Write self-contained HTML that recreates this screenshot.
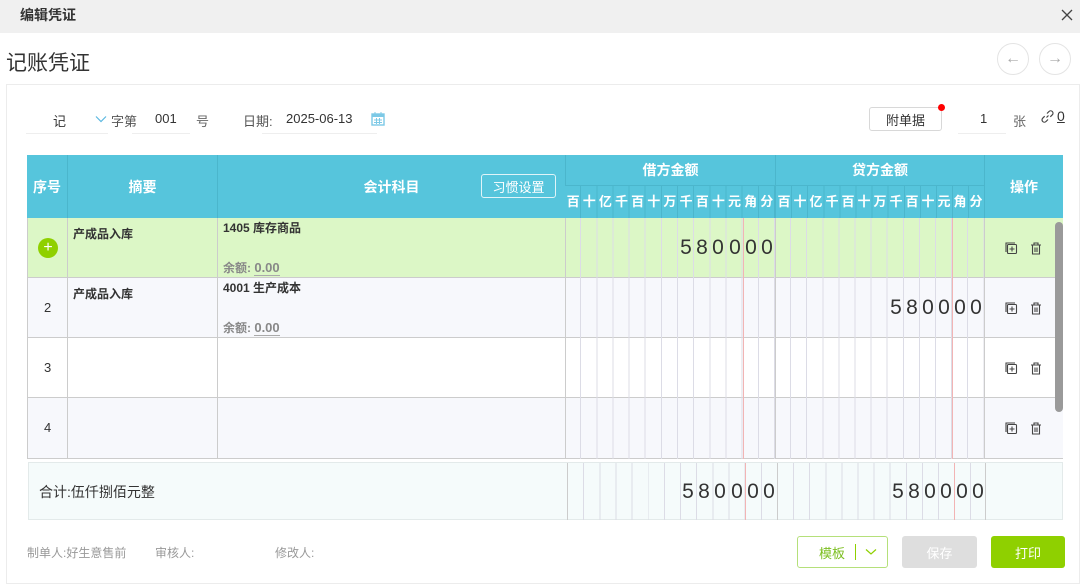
<!DOCTYPE html>
<html><head><meta charset="utf-8"><style>
*{margin:0;padding:0;box-sizing:border-box}
body{width:1080px;height:577px;overflow:hidden;background:#fff;font-family:"Liberation Sans","Noto Sans CJK SC",sans-serif;color:#333;position:relative}
.a{position:absolute}
.top{left:0;top:0;width:1080px;height:33px;background:#f0f0f0}
.hd{background:#56c5dc;color:#fff;font-weight:bold;font-size:14px}
.c{display:flex;align-items:center;justify-content:center}
.grid{background-image:repeating-linear-gradient(to right,transparent 0,transparent 15.15px,#dcdce6 15.15px,#dcdce6 16.15px)}
.grid2{background-image:repeating-linear-gradient(to right,transparent 0,transparent 15.1px,#dcdce6 15.1px,#dcdce6 16.1px)}
.hgrid{background-image:repeating-linear-gradient(to right,transparent 0,transparent 15.15px,#4bb6cc 15.15px,#4bb6cc 16.15px)}
.hgrid2{background-image:repeating-linear-gradient(to right,transparent 0,transparent 15.1px,#4bb6cc 15.1px,#4bb6cc 16.1px)}
.sub{display:flex;font-size:13px}
.sub span{width:16.15px;text-align:center;line-height:32px}
.sub2 span{width:16.1px}
.dg{position:absolute;font-size:21px;color:#333;width:16px;text-align:center;letter-spacing:0}
</style></head><body>
<div class="a top"></div>
<div class="a" style="left:20px;top:5px;font-size:14px;font-weight:bold;color:#333">编辑凭证</div>
<svg class="a" style="left:1061px;top:9px" width="12" height="12" viewBox="0 0 12 12"><path d="M1 1L11 11M11 1L1 11" stroke="#444" stroke-width="1.3"/></svg>
<div class="a" style="left:6px;top:47px;font-size:21px;color:#333">记账凭证</div>
<div class="a c" style="left:997px;top:43px;width:32px;height:32px;border:1px solid #e4e4e4;border-radius:50%;color:#aaa;font-size:16px">←</div>
<div class="a c" style="left:1039px;top:43px;width:32px;height:32px;border:1px solid #e4e4e4;border-radius:50%;color:#aaa;font-size:16px">→</div>
<div class="a" style="left:6px;top:84px;width:1074px;height:500px;border:1px solid #ececec"></div>

<div class="a" style="left:53px;top:111px;font-size:13px">记</div>
<div class="a" style="left:26px;top:133px;width:82px;height:1px;background:#eee"></div>
<svg class="a" style="left:95px;top:115px" width="12" height="8" viewBox="0 0 12 8"><path d="M1 1.5L6 6.5L11 1.5" fill="none" stroke="#5bb8e0" stroke-width="1.2"/></svg>
<div class="a" style="left:111px;top:111px;font-size:13px;color:#555">字第</div>
<div class="a" style="left:155px;top:111px;font-size:13px">001</div>
<div class="a" style="left:132px;top:133px;width:58px;height:1px;background:#eee"></div>
<div class="a" style="left:196px;top:111px;font-size:13px;color:#666">号</div>
<div class="a" style="left:243px;top:111px;font-size:13px;color:#555">日期:</div>
<div class="a" style="left:286px;top:111px;font-size:13px">2025-06-13</div>
<div class="a" style="left:262px;top:133px;width:115px;height:1px;background:#eee"></div>
<svg class="a" style="left:371px;top:112px" width="14" height="14" viewBox="0 0 14 14"><rect x="1" y="2" width="12" height="11" fill="none" stroke="#7cc9e6" stroke-width="1.4"/><rect x="1" y="2" width="12" height="3" fill="#7cc9e6"/><path d="M4 0v3M10 0v3M3 8h8M3 10.5h8M5.5 6v6M8.5 6v6" stroke="#7cc9e6" stroke-width="1"/></svg>

<div class="a c" style="left:869px;top:107px;width:73px;height:24px;border:1px solid #d8d8d8;border-radius:3px;font-size:13px">附单据</div>
<div class="a" style="left:938px;top:104px;width:7px;height:7px;border-radius:50%;background:#f00"></div>
<div class="a" style="left:980px;top:111px;font-size:13px">1</div>
<div class="a" style="left:958px;top:133px;width:48px;height:1px;background:#eee"></div>
<div class="a" style="left:1013px;top:111px;font-size:13px;color:#666">张</div>
<svg class="a" style="left:1041px;top:110px" width="13" height="13" viewBox="0 0 13 13"><path d="M5.5 7.5L7.5 5.5M6 3.5L8 1.5a2.2 2.2 0 0 1 3.3 3.3L9.3 6.8M7 9.5L5 11.5a2.2 2.2 0 0 1-3.3-3.3L3.7 6.2" fill="none" stroke="#444" stroke-width="1.2"/></svg>
<div class="a" style="left:1057px;top:108px;font-size:14px;text-decoration:underline">0</div>

<!-- header -->
<div class="a hd" style="left:27px;top:155px;width:1036px;height:63px"></div>
<div class="a hd c" style="left:27px;top:155px;width:40px;height:63px">序号</div>
<div class="a hd c" style="left:67px;top:155px;width:150px;height:63px;border-left:1px solid #4bb6cc">摘要</div>
<div class="a hd c" style="left:217px;top:155px;width:348px;height:63px;border-left:1px solid #4bb6cc">会计科目</div>
<div class="a c" style="left:481px;top:174px;width:75px;height:24px;border:1px solid #e0f4f8;border-radius:3px;color:#fff;font-size:13px">习惯设置</div>
<div class="a hd c" style="left:565px;top:155px;width:210px;height:31px;border-left:1px solid #4bb6cc;border-bottom:1px solid #4bb6cc">借方金额</div>
<div class="a hd c" style="left:775px;top:155px;width:209px;height:31px;border-left:1px solid #4bb6cc;border-bottom:1px solid #4bb6cc">贷方金额</div>
<div class="a hd c" style="left:984px;top:155px;width:79px;height:63px;border-left:1px solid #4bb6cc">操作</div>
<div class="a hd sub hgrid" style="left:565px;top:186px;width:210px;height:32px"><span>百</span><span>十</span><span>亿</span><span>千</span><span>百</span><span>十</span><span>万</span><span>千</span><span>百</span><span>十</span><span>元</span><span>角</span><span>分</span></div>
<div class="a hd sub sub2 hgrid2" style="left:775px;top:186px;width:209px;height:32px;border-left:1px solid #4bb6cc"><span>百</span><span>十</span><span>亿</span><span>千</span><span>百</span><span>十</span><span>万</span><span>千</span><span>百</span><span>十</span><span>元</span><span>角</span><span>分</span></div>

<!-- rows -->
<div class="a" style="left:27px;top:218px;width:1036px;height:60px;background:#dcf7c6;border-bottom:1px solid #ccc"></div>
<div class="a" style="left:27px;top:278px;width:1036px;height:60px;background:#f7f8fc;border-bottom:1px solid #ccc"></div>
<div class="a" style="left:27px;top:338px;width:1036px;height:60px;background:#fff;border-bottom:1px solid #ccc"></div>
<div class="a" style="left:27px;top:398px;width:1036px;height:61px;background:#f7f8fc;border-bottom:1px solid #ccc"></div>
<div class="a grid" style="left:565px;top:218px;width:210px;height:241px"></div>
<div class="a grid2" style="left:775px;top:218px;width:209px;height:241px"></div>
<div class="a" style="left:27px;top:218px;width:1px;height:241px;background:#ccc"></div>
<div class="a" style="left:67px;top:218px;width:1px;height:241px;background:#ccc"></div>
<div class="a" style="left:217px;top:218px;width:1px;height:241px;background:#ccc"></div>
<div class="a" style="left:565px;top:218px;width:1px;height:241px;background:#ccc"></div>
<div class="a" style="left:743px;top:218px;width:1px;height:241px;background:#f2b4b4"></div>
<div class="a" style="left:775px;top:218px;width:1px;height:241px;background:#ccc"></div>
<div class="a" style="left:952px;top:218px;width:1px;height:241px;background:#f2b4b4"></div>
<div class="a" style="left:984px;top:218px;width:1px;height:241px;background:#ccc"></div>
<div class="a" style="left:1055px;top:222px;width:8px;height:190px;background:#9a9a9a;border-radius:4px"></div>

<div class="a c" style="left:38px;top:238px;width:20px;height:20px;border-radius:50%;background:#8fd000;color:#fff;font-size:16px">+</div>
<div class="a" style="left:44px;top:300px;font-size:13px">2</div>
<div class="a" style="left:44px;top:360px;font-size:13px">3</div>
<div class="a" style="left:44px;top:420px;font-size:13px">4</div>
<div class="a" style="left:73px;top:225px;font-size:12px;font-weight:bold">产成品入库</div>
<div class="a" style="left:73px;top:285px;font-size:12px;font-weight:bold">产成品入库</div>
<div class="a" style="left:223px;top:219px;font-size:12px;font-weight:bold">1405 库存商品</div>
<div class="a" style="left:223px;top:279px;font-size:12px;font-weight:bold">4001 生产成本</div>
<div class="a" style="left:223px;top:259px;font-size:12px;color:#888;font-weight:bold">余额: <span style="border-bottom:1px solid #aaa;font-size:13px">0.00</span></div>
<div class="a" style="left:223px;top:319px;font-size:12px;color:#888;font-weight:bold">余额: <span style="border-bottom:1px solid #aaa;font-size:13px">0.00</span></div>

<div class="dg" style="left:678px;top:236px">5</div><div class="dg" style="left:694px;top:236px">8</div><div class="dg" style="left:710px;top:236px">0</div><div class="dg" style="left:727px;top:236px">0</div><div class="dg" style="left:743px;top:236px">0</div><div class="dg" style="left:759px;top:236px">0</div>
<div class="dg" style="left:888px;top:296px">5</div><div class="dg" style="left:904px;top:296px">8</div><div class="dg" style="left:920px;top:296px">0</div><div class="dg" style="left:936px;top:296px">0</div><div class="dg" style="left:952px;top:296px">0</div><div class="dg" style="left:968px;top:296px">0</div>

<svg class="a" style="left:1005px;top:242px" width="60" height="200" viewBox="0 0 60 200">
<g id="o" fill="none" stroke="#444" stroke-width="1.1">
<rect x="2.5" y="2.5" width="9" height="9" rx="1"/><path d="M1 10V1h9"/><path d="M7 4.5v5M4.5 7h5"/>
<path d="M26 3h10M29 3V1h4v2M27.5 3v9h7V3M30 5.5v4.5M32 5.5v4.5"/>
</g>
<use href="#o" y="60"/><use href="#o" y="120"/><use href="#o" y="180"/>
</svg>

<!-- totals -->
<div class="a" style="left:28px;top:462px;width:1035px;height:58px;background:#f5fbfb;border:1px solid #e3eaea"></div>
<div class="a grid" style="left:567px;top:463px;width:210px;height:57px;border-left:1px solid #ccc"></div>
<div class="a grid2" style="left:777px;top:463px;width:209px;height:57px;border-left:1px solid #ccc;border-right:1px solid #ccc"></div>
<div class="a" style="left:745px;top:463px;width:1px;height:57px;background:#f2b4b4"></div>
<div class="a" style="left:954px;top:463px;width:1px;height:57px;background:#f2b4b4"></div>
<div class="a" style="left:39px;top:482px;font-size:14px">合计:伍仟捌佰元整</div>
<div class="dg" style="left:680px;top:480px">5</div><div class="dg" style="left:696px;top:480px">8</div><div class="dg" style="left:712px;top:480px">0</div><div class="dg" style="left:729px;top:480px">0</div><div class="dg" style="left:745px;top:480px">0</div><div class="dg" style="left:761px;top:480px">0</div>
<div class="dg" style="left:890px;top:480px">5</div><div class="dg" style="left:906px;top:480px">8</div><div class="dg" style="left:922px;top:480px">0</div><div class="dg" style="left:938px;top:480px">0</div><div class="dg" style="left:954px;top:480px">0</div><div class="dg" style="left:970px;top:480px">0</div>

<div class="a" style="left:27px;top:544px;font-size:12px;color:#999">制单人:好生意售前</div>
<div class="a" style="left:155px;top:544px;font-size:12px;color:#999">审核人:</div>
<div class="a" style="left:275px;top:544px;font-size:12px;color:#999">修改人:</div>

<div class="a" style="left:797px;top:536px;width:91px;height:32px;border:1px solid #b5e07a;border-radius:3px"></div>
<div class="a" style="left:819px;top:543px;font-size:13px;color:#7cbf20">模板</div>
<div class="a" style="left:855px;top:544px;width:1px;height:16px;background:#8fd000"></div>
<svg class="a" style="left:865px;top:548px" width="12" height="8" viewBox="0 0 12 8"><path d="M1 1.5L6 6L11 1.5" fill="none" stroke="#8fd000" stroke-width="1.2"/></svg>
<div class="a c" style="left:902px;top:536px;width:75px;height:32px;background:#dedede;border-radius:3px;color:#fff;font-size:13px">保存</div>
<div class="a c" style="left:991px;top:536px;width:74px;height:32px;background:#8fd000;border-radius:3px;color:#fff;font-size:13px">打印</div>
</body></html>
